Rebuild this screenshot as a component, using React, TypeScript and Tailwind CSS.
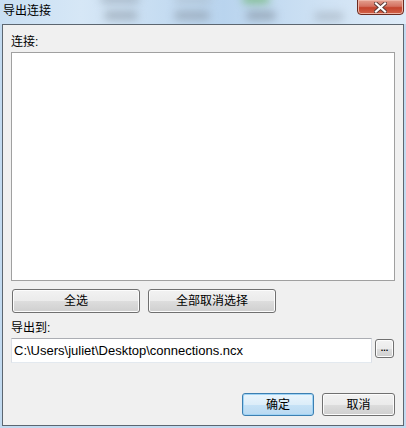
import React from "react"

const font = { fontFamily: '"Liberation Sans", "Noto Sans CJK SC", sans-serif' }

function WinButton({ label, className = "", primary = false }: { label: string; className?: string; primary?: boolean }) {
  return (
    <button
      type="button"
      className={`relative flex items-center justify-center rounded-[3px] border text-[12px] text-black ${
        primary
          ? "border-[#3c7fb1] bg-[linear-gradient(#eaf5fc_0%,#dcedf9_50%,#c6e2f6_51%,#b9d9f1_100%)] shadow-[inset_0_0_0_1px_#9fd3f5]"
          : "border-[#707070] bg-[linear-gradient(#f2f2f2_0%,#ebebeb_50%,#dddddd_51%,#cfcfcf_100%)] shadow-[inset_0_0_0_1px_#fcfcfc]"
      } ${className}`}
    >
      {label}
    </button>
  )
}

export default function App() {
  return (
    <div className="relative h-[428px] w-[406px] overflow-hidden bg-[#c2daf0]" style={font}>
      {/* Title bar */}
      <div className="relative h-[24px] overflow-hidden bg-[linear-gradient(90deg,#c9dff3_0%,#d6e7f6_20%,#b9d4ee_55%,#cfe2f4_80%,#dfecf8_100%)]">
        <div className="absolute left-[100px] top-[-6px] h-[10px] w-[40px] rounded-full bg-[#8b98a6] opacity-50 blur-[4px]" />
        <div className="absolute left-[104px] top-[11px] h-[9px] w-[34px] rounded-full bg-[#7d8894] opacity-50 blur-[4px]" />
        <div className="absolute left-[174px] top-[-6px] h-[10px] w-[38px] rounded-full bg-[#a0adb9] opacity-40 blur-[4px]" />
        <div className="absolute left-[174px] top-[11px] h-[9px] w-[36px] rounded-full bg-[#7d8894] opacity-50 blur-[4px]" />
        <div className="absolute left-[242px] top-[-6px] h-[10px] w-[28px] rounded-full bg-[#5fae5c] opacity-60 blur-[4px]" />
        <div className="absolute left-[246px] top-[11px] h-[9px] w-[30px] rounded-full bg-[#6f7b87] opacity-50 blur-[4px]" />
        <div className="absolute left-[314px] top-[12px] h-[9px] w-[30px] rounded-full bg-[#98a4b0] opacity-50 blur-[4px]" />
        <span className="absolute left-[3px] top-[3px] text-[12px] leading-[16px] text-black">导出连接</span>
        {/* Close button */}
        <div className="absolute right-[2px] top-[-1px] flex h-[16px] w-[47px] items-center justify-center rounded-b-[4px] border border-[#6b2b20] bg-[linear-gradient(#e4a08f_0%,#d47160_45%,#c4432c_55%,#d2644b_100%)] shadow-[inset_0_0_0_1px_#eeb6a8]">
          <svg width="13" height="11" viewBox="0 0 13 11">
            <path d="M2 1.5 L11 9.5 M11 1.5 L2 9.5" stroke="#5b3a36" strokeWidth="4" strokeLinecap="square" />
            <path d="M2 1.5 L11 9.5 M11 1.5 L2 9.5" stroke="#ffffff" strokeWidth="2.2" strokeLinecap="square" />
          </svg>
        </div>
      </div>

      {/* Window body */}
      <div className="ml-[2px] flex h-[402px] w-[402px] flex-col border border-[#5c6670] bg-[#f0f0f0]">
        <div className="ml-[8px] mt-[9px] h-[16px] text-[12px] leading-[16px] text-black">连接:</div>
        <div className="ml-[8px] mt-[2px] h-[229px] w-[384px] border border-[#a0a0a0] bg-white" />
        <div className="ml-[9px] mt-[8px] flex gap-[8px]">
          <WinButton label="全选" className="h-[24px] w-[128px]" />
          <WinButton label="全部取消选择" className="h-[24px] w-[128px]" />
        </div>
        <div className="ml-[8px] mt-[7px] h-[16px] text-[12px] leading-[16px] text-black">导出到:</div>
        <div className="ml-[8px] mt-[2px] flex items-start">
          <div className="flex h-[25px] w-[361px] items-center border border-[#abadb3] border-l-[#dbdfe6] border-r-[#dbdfe6] border-b-[#e3e9ef] bg-white pl-[2px] text-[13px] text-black">
            C:\Users\juliet\Desktop\connections.ncx
          </div>
          <button
            type="button"
            className="ml-[3px] mt-[1px] flex h-[19px] w-[19px] items-end justify-center rounded-[3px] border border-[#707070] bg-[linear-gradient(#f2f2f2_0%,#ebebeb_50%,#dddddd_51%,#cfcfcf_100%)] pb-[4px] text-[9px] font-bold leading-none text-black shadow-[inset_0_0_0_1px_#fcfcfc]"
          >
            ...
          </button>
        </div>
        <div className="mr-[8px] mt-[30px] flex justify-end gap-[8px]">
          <WinButton label="确定" primary className="h-[23px] w-[72px]" />
          <WinButton label="取消" className="h-[23px] w-[73px]" />
        </div>
      </div>
    </div>
  )
}
